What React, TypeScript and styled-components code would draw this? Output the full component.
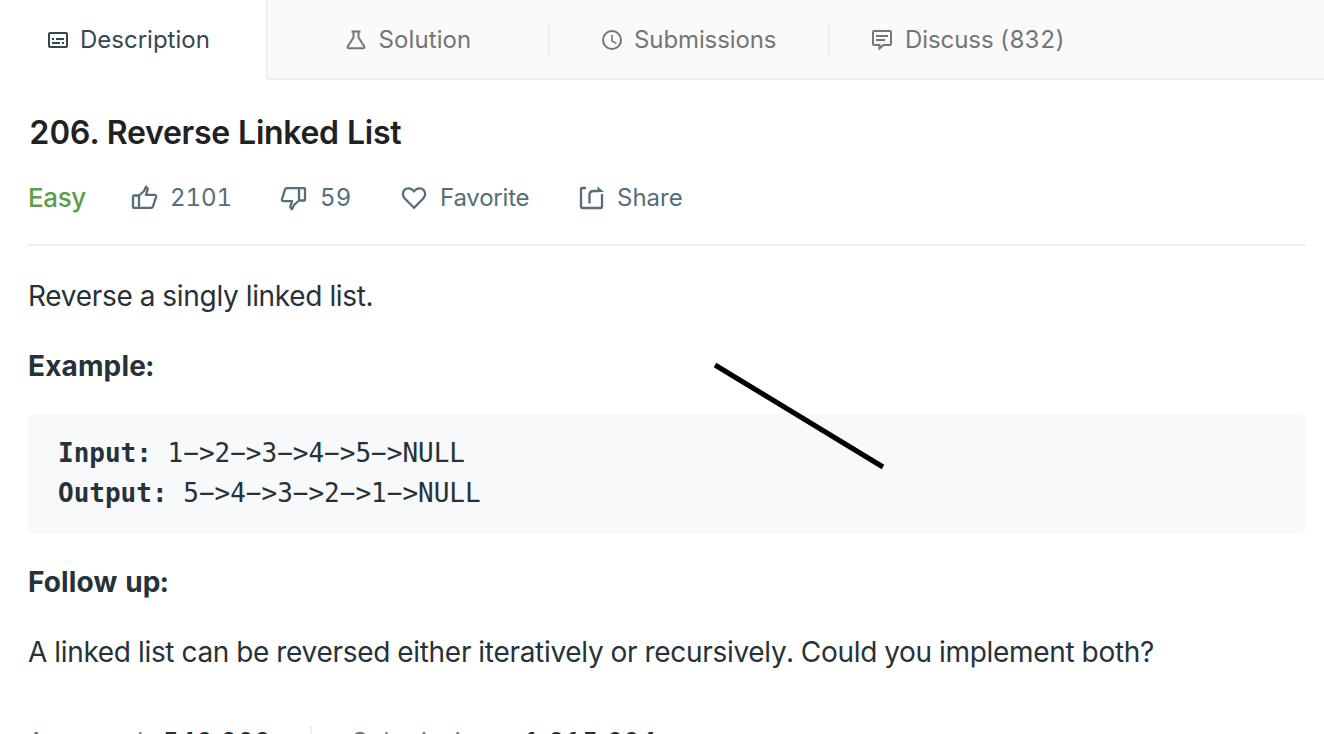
import React from "react";
import styled, { createGlobalStyle } from "styled-components";

const GlobalStyle = createGlobalStyle`
  * { box-sizing: border-box; }
  html, body { margin: 0; background: #fff; overflow: hidden; }
  body {
    font-family: Inter, "Liberation Sans", sans-serif;
    font-variant-numeric: tabular-nums;
    color: #263238;
  }
`;

const Page = styled.div`
  position: relative;
  width: 1324px;
  height: 734px;
  overflow: hidden;
  background: #fff;
`;

const TabBar = styled.nav`
  display: flex;
  height: 80px;
`;

const Tab = styled.div<{ $width: number; $pad: number; $active?: boolean; $divider?: boolean }>`
  position: relative;
  display: flex;
  align-items: center;
  flex: none;
  width: ${(p) => p.$width}px;
  height: 80px;
  padding-top: 2px;
  padding-left: ${(p) => p.$pad}px;
  background: ${(p) => (p.$active ? "#fff" : "#fafafa")};
  color: ${(p) => (p.$active ? "#37474f" : "#757575")};
  border-bottom: 2px solid ${(p) => (p.$active ? "#fff" : "#eee")};
  border-right: ${(p) => (p.$active ? "2px solid #eee" : "none")};
  &::after {
    content: "";
    display: ${(p) => (p.$divider ? "block" : "none")};
    position: absolute;
    right: 0;
    top: 24px;
    width: 2px;
    height: 32px;
    background: #eee;
  }
`;

const TabFill = styled.div`
  flex: 1;
  background: #fafafa;
  border-bottom: 2px solid #eee;
`;

const Label = styled.span<{ $gap: number; $ls?: number }>`
  margin-left: ${(p) => p.$gap}px;
  font-size: 24px;
  line-height: 32px;
  letter-spacing: ${(p) => p.$ls ?? 0}px;
  white-space: nowrap;
`;

const Icon = styled.svg`
  flex: none;
  display: block;
  fill: none;
  stroke: currentColor;
  stroke-width: 2;
`;

const Content = styled.main`
  padding: 32px 18px 0 28px;
`;

const Title = styled.h1`
  margin: 0;
  padding-left: 1px;
  color: #212121;
  font-size: 32px;
  line-height: 42px;
  font-weight: 600;
  letter-spacing: -0.3px;
`;

const Meta = styled.div`
  display: flex;
  align-items: center;
  height: 92px;
  padding-bottom: 2px;
  border-bottom: 2px solid #eee;
  color: #546e7a;
`;

const Difficulty = styled.span`
  width: 103px;
  color: #5a9e4b;
  font-size: 26px;
  line-height: 32px;
  font-weight: 500;
  letter-spacing: -0.4px;
`;

const Action = styled.div<{ $width: number }>`
  display: flex;
  align-items: center;
  width: ${(p) => p.$width}px;
`;

const Paragraph = styled.p<{ $top: number; $ls: number; $bold?: boolean }>`
  margin: ${(p) => p.$top}px 0 0;
  font-size: 28px;
  line-height: 42px;
  letter-spacing: ${(p) => p.$ls}px;
  font-weight: ${(p) => (p.$bold ? 700 : 400)};
  white-space: nowrap;
`;

const Code = styled.pre`
  margin: 27px 0 0;
  height: 120px;
  padding: 19px 30px;
  border-radius: 6px;
  background: #f7f9fb;
  font-family: "DejaVu Sans Mono", monospace;
  font-size: 26px;
  line-height: 40px;
`;

const Stats = styled.footer`
  display: flex;
  height: 32px;
  margin-top: 53px;
  align-items: center;
  font-size: 24px;
  color: #757575;
`;

const Stat = styled.div<{ $width: number; $pad: number; $line?: boolean }>`
  display: flex;
  width: ${(p) => p.$width}px;
  height: 32px;
  line-height: 32px;
  padding-left: ${(p) => p.$pad}px;
  border-right: ${(p) => (p.$line ? "2px solid #eee" : "none")};
  white-space: nowrap;
`;

const StatName = styled.span<{ $width: number }>`
  width: ${(p) => p.$width}px;
  letter-spacing: 0.9px;
`;

const StatValue = styled.span`
  color: #263238;
  font-weight: 600;
  letter-spacing: 1.3px;
`;

const Stroke = styled.svg`
  position: absolute;
  left: 700px;
  top: 350px;
`;

const THUMB =
  "M2.800 10.500H8V22.800H2.800Q2 22.800 2 22V11.300Q2 10.500 2.800 10.500ZM8 10.500L13 6 15 1.800 16.800 3.800 15 9.800H23.800Q25.500 10 25 12L22 21.300Q21.500 22.800 20 22.800H8";

export default function App() {
  return (
    <Page>
      <GlobalStyle />
      <TabBar>
        <Tab $width={268} $pad={48} $active>
          <Icon width="20" height="16" viewBox="0 0 20 16">
            <rect x="1" y="1" width="18" height="14" rx="1" />
            <path d="M4 7h2M8 7h8M4 11h8M14 11h2" />
          </Icon>
          <Label $gap={12}>Description</Label>
        </Tab>
        <Tab $width={282} $pad={78} $divider>
          <Icon width="20" height="20" viewBox="0 0 20 20">
            <path d="M5.500 1.500h9M7.500 2v5.500L2 16c-.9 1.500-.3 2.200 1 2.200h14c1.300 0 1.900-.7 1-2.200L12.500 7.500V2" />
          </Icon>
          <Label $gap={12.5} $ls={0.1}>Solution</Label>
        </Tab>
        <Tab $width={280} $pad={52} $divider>
          <Icon width="20" height="20" viewBox="0 0 20 20">
            <circle cx="10" cy="10" r="9" />
            <path d="M10 5v6l4.500 2.600" strokeWidth="1.600" />
          </Icon>
          <Label $gap={12} $ls={-0.1}>Submissions</Label>
        </Tab>
        <Tab $width={260} $pad={42}>
          <Icon width="20" height="20" viewBox="0 0 20 20">
            <path d="M1 2.200Q1 1 2.200 1H17.800Q19 1 19 2.200V13.800Q19 15 17.800 15H11.500L7.500 18.500V15H2.200Q1 15 1 13.800Z" />
            <path d="M4 6h12M4 10h9" />
          </Icon>
          <Label $gap={13} $ls={-0.08}>Discuss (832)</Label>
        </Tab>
        <TabFill />
      </TabBar>
      <Content>
        <Title>206. Reverse Linked List</Title>
        <Meta>
          <Difficulty>Easy</Difficulty>
          <Action $width={149}>
            <Icon width="27" height="26" viewBox="0 0 27 26">
              <path strokeWidth="2.300" strokeLinejoin="round" d={THUMB} />
            </Icon>
            <Label $gap={12} $ls={-0.1}>2101</Label>
          </Action>
          <Action $width={121}>
            <Icon width="27" height="26" viewBox="0 0 27 26">
              <path strokeWidth="2.300" strokeLinejoin="round" transform="rotate(180 13.500 13)" d={THUMB} />
            </Icon>
            <Label $gap={13} $ls={0.3}>59</Label>
          </Action>
          <Action $width={178}>
            <Icon width="26" height="24" viewBox="0 0 26 24">
              <path strokeWidth="2.300" d="M13 21.800L4 12.800C1.300 10.100 1.200 6.200 3.500 3.900 6 1.400 10.200 2 13 5.200 15.800 2 20 1.400 22.500 3.900 24.800 6.200 24.700 10.100 22 12.800Z" />
            </Icon>
            <Label $gap={13} $ls={-0.2}>Favorite</Label>
          </Action>
          <Action $width={120}>
            <Icon width="26" height="24" viewBox="0 0 26 24">
              <path strokeWidth="2.300" d="M7 2H3Q2 2 2 3V21Q2 22 3 22H22Q23 22 23 21V8M10.500 17.500V9Q10.500 5 14.500 5H20" />
              <path d="M18.500 0.500L25 6H18.500Z" fill="currentColor" stroke="none" />
            </Icon>
            <Label $gap={12}>Share</Label>
          </Action>
        </Meta>
        <Paragraph $top={29} $ls={-0.3}>Reverse a singly linked list.</Paragraph>
        <Paragraph $top={28} $ls={0.15} $bold>Example:</Paragraph>
        <Code>
          <b>Input:</b>{" 1−>2−>3−>4−>5−>NULL\n"}
          <b>Output:</b>{" 5−>4−>3−>2−>1−>NULL"}
        </Code>
        <Paragraph $top={27} $ls={0.15} $bold>Follow up:</Paragraph>
        <Paragraph $top={28} $ls={-0.305}>
          A linked list can be reversed either iteratively or recursively. Could you implement both?
        </Paragraph>
        <Stats>
          <Stat $width={284} $pad={0} $line>
            <StatName $width={135}>Accepted</StatName>
            <StatValue>540,909</StatValue>
          </Stat>
          <Stat $width={400} $pad={40}>
            <StatName $width={172}>Submissions</StatName>
            <StatValue>1,015,604</StatValue>
          </Stat>
        </Stats>
      </Content>
      <Stroke width="200" height="130" viewBox="0 0 200 130">
        <path d="M15 15L183 117" stroke="#000" strokeWidth="5" />
      </Stroke>
    </Page>
  );
}
